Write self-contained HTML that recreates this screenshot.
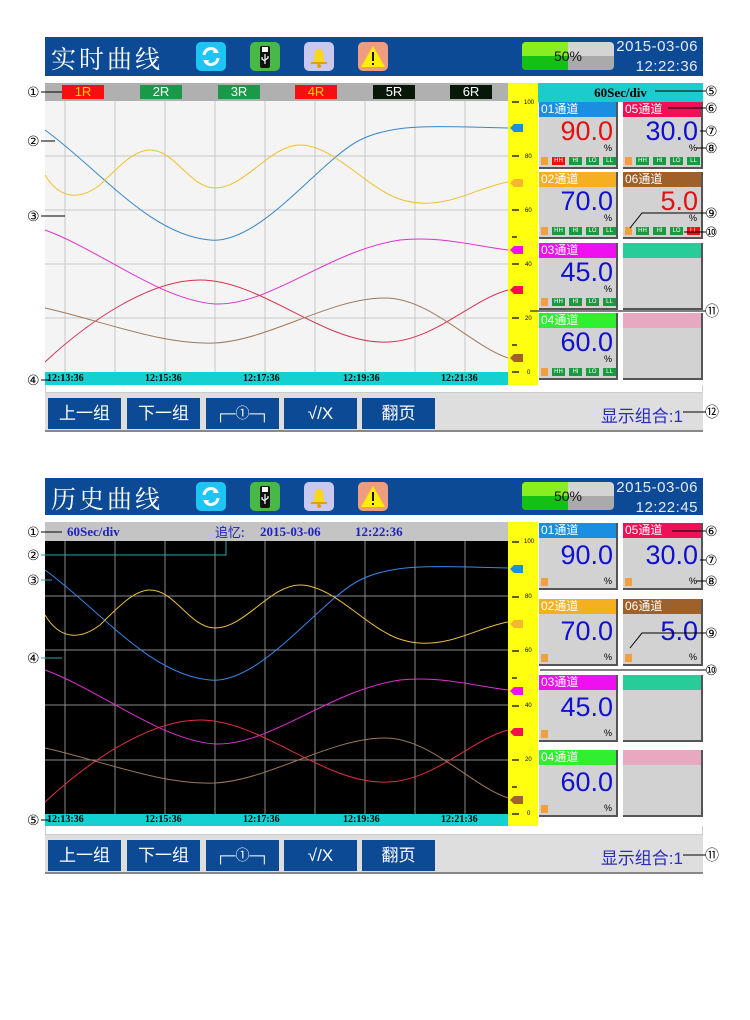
<!DOCTYPE html>
<html><head><meta charset="utf-8">
<style>
*{margin:0;padding:0;box-sizing:border-box}
body{width:750px;height:1020px;background:#fff;position:relative;overflow:hidden;font-family:"Liberation Sans","Noto Sans CJK SC",sans-serif}
.a{position:absolute}
.hdr{position:absolute;left:45px;width:658px;height:39px;background:#0d4a96}
.title{position:absolute;left:6px;top:3px;color:#fff;font-size:25px;letter-spacing:3px;font-family:"Noto Serif CJK SC","Noto Sans CJK SC",serif}
.ic{position:absolute;top:5px;width:30px;height:29px;border-radius:5px}
.bat{position:absolute;left:477px;top:5px;width:92px;height:28px;border-radius:4px;background:linear-gradient(#d4d4d4 50%,#aaa 50%);overflow:hidden}
.bat i{position:absolute;left:0;top:0;width:46px;height:28px;background:linear-gradient(#88ee22 50%,#14c014 50%)}
.bat b{position:absolute;left:0;width:92px;top:6px;text-align:center;font-weight:normal;font-size:14px;color:#111}
.dt{position:absolute;right:5px;color:#e4eaff;font-family:"Liberation Sans Narrow","Liberation Sans",sans-serif;font-size:15px;line-height:20px;text-align:right;top:0;letter-spacing:0.5px}
.lbar{position:absolute;left:45px;top:83px;width:463px;height:18px;background:#b0b0b0}
.lb{position:absolute;top:2px;width:42px;height:14px;font-size:13px;line-height:14px;text-align:center}
.scale{position:absolute;left:508px;width:30px;background:#ffff10}
.card{position:absolute;width:79px;height:67px;background:#d2d2d2;border-right:2px solid #555;border-bottom:2px solid #555}
.ch{height:15px;font-size:12px;color:#fff;line-height:15px;padding-left:2px}
.v{position:absolute;right:3px;top:15px;font-size:27px;line-height:28px}
.pc{position:absolute;right:4px;top:41px;font-size:9px;color:#000}
.al{position:absolute;left:2px;top:55px;height:8px;width:76px;display:flex;gap:4px}
.al span{display:block;height:8px;width:13px;background:#1a9a40;color:#fff;font-size:6px;line-height:8px;text-align:center}
.al .ck{width:7px;background:#f0a040}
.al .r{background:#ee1010}
.btnbar{position:absolute;left:45px;width:658px;height:39px;background:#dedede;border-bottom:2px solid #888}
.bt{position:absolute;top:5px;height:31px;width:73px;background:#0d4a96;color:#fff;font-size:17px;text-align:center;line-height:31px}
.disp{position:absolute;right:20px;top:9px;font-size:17px;color:#2a2ac0}
.tbar{position:absolute;left:45px;width:463px;height:13px;background:#14d0d0;font-family:"Liberation Serif",serif;font-weight:bold;font-size:10px;line-height:13px;color:#000}
.tbar span{position:absolute;top:0}
</style></head><body>

<div class="hdr" style="top:37px">
 <div class="title">实时曲线</div>
 <div class="ic" style="left:151px;background:#1ec4f4"><svg width="30" height="29"><path d="M8 13a7 7 0 0 1 13-3" stroke="#fff" stroke-width="3" fill="none"/><path d="M19 6l4 5-6 0z" fill="#fff"/><path d="M22 16a7 7 0 0 1-13 3" stroke="#fff" stroke-width="3" fill="none"/><path d="M11 23l-4-5 6 0z" fill="#fff"/></svg></div>
 <div class="ic" style="left:205px;background:#48b848"><svg width="30" height="29"><rect x="10" y="4" width="10" height="22" rx="2" fill="#111"/><rect x="12" y="5" width="6" height="5" fill="#fff"/><path d="M15 12v10M12 15v2l3 2M18 14v2l-3 2" stroke="#fff" stroke-width="1.2" fill="none"/></svg></div>
 <div class="ic" style="left:259px;background:#cac8ee"><svg width="30" height="29"><path d="M9 20c2-2 1-5 2-9a4 4 0 0 1 8 0c1 4 0 7 2 9z" fill="#f8d818"/><rect x="7" y="20" width="16" height="2" fill="#e0a000"/><circle cx="15" cy="24" r="2" fill="#e0a000"/></svg></div>
 <div class="ic" style="left:313px;background:#f09c80"><svg width="30" height="29"><path d="M15 4L27 25H3z" fill="#ffee00"/><rect x="14" y="10" width="2" height="9" fill="#111"/><rect x="14" y="21" width="2" height="2" fill="#111"/></svg></div>
 <div class="bat"><i></i><b>50%</b></div>
 <div class="dt">2015-03-06<br>12:22:36</div>
</div>

<div class="lbar">
 <div class="lb" style="left:17px;background:#f41010;color:#ffd000">1R</div>
 <div class="lb" style="left:95px;background:#1a9a48;color:#fff">2R</div>
 <div class="lb" style="left:173px;background:#1a9a48;color:#fff">3R</div>
 <div class="lb" style="left:250px;background:#f41010;color:#ffd000">4R</div>
 <div class="lb" style="left:328px;background:#081808;color:#fff">5R</div>
 <div class="lb" style="left:405px;background:#081808;color:#fff">6R</div>
</div>

<svg class="a" style="left:0;top:0" width="750" height="1020">
 <rect x="45" y="101" width="463" height="271" fill="#f4f4f4"/>
 <g stroke="#c8c8c8" stroke-width="1">
  <path d="M65 101V372M115 101V372M165 101V372M215 101V372M265 101V372M315 101V372M365 101V372M415 101V372M465 101V372"/>
  <path d="M45 156H508M45 210H508M45 264H508M45 318H508"/>
 </g>
 <g fill="none" stroke-width="1">
  <path d="M45 130C100 170 150 235 210 240C260 245 320 160 360 140C390 125 430 126 470 127L508 128" stroke="#3a86c8"/>
  <path d="M45 175C60 200 80 200 100 185C120 165 135 150 150 150C175 150 190 188 215 188C245 188 270 145 300 145C330 145 360 180 390 195C410 205 430 205 450 200C470 195 490 185 508 182" stroke="#f0c030"/>
  <path d="M45 230C100 250 160 300 215 304C270 306 330 250 400 240C440 236 470 245 508 250" stroke="#e030d0"/>
  <path d="M45 362C90 320 150 280 200 280C260 280 320 340 380 342C430 345 470 300 508 290" stroke="#d83050"/>
  <path d="M45 308C100 320 160 345 215 343C270 340 330 298 385 298C430 298 470 345 508 358" stroke="#a0785a"/>
 </g>
</svg>

<div class="scale" style="top:83px;height:302px"></div>
<svg class="a" style="left:508px;top:83px" width="30" height="302">
 <g stroke="#000" stroke-width="1.3"><path d="M4 19h7M4 73h7M4 127h7M4 181h7M4 235h7M4 289h7M4 46h5M4 100h5M4 154h5M4 208h5M4 262h5"/></g>
 <g font-size="6" fill="#000" font-family="Liberation Sans"><text x="16" y="21">100</text><text x="17" y="75">80</text><text x="17" y="129">60</text><text x="17" y="183">40</text><text x="17" y="237">20</text><text x="19" y="291">0</text></g>
 <path d="M2 45l4-4h9v8h-9z" fill="#1a8ee0"/>
 <path d="M2 100l4-4h9v8h-9z" fill="#f4b830"/>
 <path d="M2 167l4-4h9v8h-9z" fill="#ee10ee"/>
 <path d="M2 207l4-4h9v8h-9z" fill="#f41050"/>
 <path d="M2 275l4-4h9v8h-9z" fill="#a06030"/>
</svg>

<div class="a" style="left:538px;top:83px;width:165px;height:19px;background:#1ccccc;text-align:center;font-family:'Liberation Serif',serif;font-weight:bold;font-size:13px;line-height:19px">60Sec/div</div>
<div class="a" style="left:538px;top:102px;width:165px;height:283px;background:#fff"></div>

<div class="card" style="left:539px;top:102px"><div class="ch" style="background:#1a8ee0">01通道</div><div class="v" style="color:#e41010">90.0</div><div class="pc">%</div><div class="al"><span class="ck"></span><span class="r">HH</span><span>HI</span><span>LO</span><span>LL</span></div></div>
<div class="card" style="left:623px;top:102px;width:80px"><div class="ch" style="background:#f01058">05通道</div><div class="v" style="color:#1010d0">30.0</div><div class="pc">%</div><div class="al"><span class="ck"></span><span>HH</span><span>HI</span><span>LO</span><span>LL</span></div></div>
<div class="card" style="left:539px;top:172px"><div class="ch" style="background:#f4b020">02通道</div><div class="v" style="color:#1010d0">70.0</div><div class="pc">%</div><div class="al"><span class="ck"></span><span>HH</span><span>HI</span><span>LO</span><span>LL</span></div></div>
<div class="card" style="left:623px;top:172px;width:80px"><div class="ch" style="background:#a0602a">06通道</div><div class="v" style="color:#e41010">5.0</div><div class="pc">%</div><div class="al"><span class="ck"></span><span>HH</span><span>HI</span><span>LO</span><span class="r">LL</span></div></div>
<div class="card" style="left:539px;top:243px"><div class="ch" style="background:#ee10ee">03通道</div><div class="v" style="color:#1010d0">45.0</div><div class="pc">%</div><div class="al"><span class="ck"></span><span>HH</span><span>HI</span><span>LO</span><span>LL</span></div></div>
<div class="card" style="left:623px;top:243px;width:80px"><div class="ch" style="background:#28cc98"></div></div>
<div class="card" style="left:539px;top:313px"><div class="ch" style="background:#30ee30">04通道</div><div class="v" style="color:#1010d0">60.0</div><div class="pc">%</div><div class="al"><span class="ck"></span><span>HH</span><span>HI</span><span>LO</span><span>LL</span></div></div>
<div class="card" style="left:623px;top:313px;width:80px"><div class="ch" style="background:#e8a8c0"></div></div>

<div class="tbar" style="top:372px"><span style="left:2px">12:13:36</span><span style="left:100px">12:15:36</span><span style="left:198px">12:17:36</span><span style="left:298px">12:19:36</span><span style="left:396px">12:21:36</span></div>
<div class="a" style="left:45px;top:385px;width:658px;height:8px;border:1px solid #ccc;border-top:none;background:#fff"></div>
<div class="btnbar" style="top:393px">
 <div class="bt" style="left:3px">上一组</div>
 <div class="bt" style="left:82px">下一组</div>
 <div class="bt" style="left:161px;font-size:14px">┌─①─┐</div>
 <div class="bt" style="left:239px">√/X</div>
 <div class="bt" style="left:317px">翻页</div>
 <div class="disp">显示组合:1</div>
</div>

<div class="hdr" style="top:478px;height:37px">
 <div class="title" style="top:2px">历史曲线</div>
 <div class="ic" style="left:151px;top:4px;background:#1ec4f4"><svg width="30" height="29"><path d="M8 13a7 7 0 0 1 13-3" stroke="#fff" stroke-width="3" fill="none"/><path d="M19 6l4 5-6 0z" fill="#fff"/><path d="M22 16a7 7 0 0 1-13 3" stroke="#fff" stroke-width="3" fill="none"/><path d="M11 23l-4-5 6 0z" fill="#fff"/></svg></div>
 <div class="ic" style="left:205px;top:4px;background:#48b848"><svg width="30" height="29"><rect x="10" y="4" width="10" height="22" rx="2" fill="#111"/><rect x="12" y="5" width="6" height="5" fill="#fff"/><path d="M15 12v10M12 15v2l3 2M18 14v2l-3 2" stroke="#fff" stroke-width="1.2" fill="none"/></svg></div>
 <div class="ic" style="left:259px;top:4px;background:#cac8ee"><svg width="30" height="29"><path d="M9 20c2-2 1-5 2-9a4 4 0 0 1 8 0c1 4 0 7 2 9z" fill="#f8d818"/><rect x="7" y="20" width="16" height="2" fill="#e0a000"/><circle cx="15" cy="24" r="2" fill="#e0a000"/></svg></div>
 <div class="ic" style="left:313px;top:4px;background:#f09c80"><svg width="30" height="29"><path d="M15 4L27 25H3z" fill="#ffee00"/><rect x="14" y="10" width="2" height="9" fill="#111"/><rect x="14" y="21" width="2" height="2" fill="#111"/></svg></div>
 <div class="bat" style="top:4px"><i></i><b>50%</b></div>
 <div class="dt">2015-03-06<br>12:22:45</div>
</div>

<div class="a" style="left:45px;top:522px;width:463px;height:19px;background:#c4c4c4;font-family:'Liberation Serif',serif;font-weight:bold;font-size:13px;line-height:19px;color:#2020c0">
 <span class="a" style="left:22px">60Sec/div</span>
 <span class="a" style="left:170px;font-family:'Noto Sans CJK SC',sans-serif;font-weight:normal">追忆:</span>
 <span class="a" style="left:215px">2015-03-06</span>
 <span class="a" style="left:310px">12:22:36</span>
</div>

<svg class="a" style="left:0;top:0" width="750" height="1020">
 <rect x="45" y="541" width="463" height="273" fill="#000"/>
 <g stroke="#8a8a8a" stroke-width="1">
  <path d="M65 541V814M115 541V814M165 541V814M215 541V814M265 541V814M315 541V814M365 541V814M415 541V814M465 541V814"/>
  <path d="M45 596H508M45 650H508M45 705H508M45 760H508"/>
 </g>
 <g transform="translate(0,440)" fill="none" stroke-width="1">
  <path d="M45 130C100 170 150 235 210 240C260 245 320 160 360 140C390 125 430 126 470 127L508 128" stroke="#3a86e8"/>
  <path d="M45 175C60 200 80 200 100 185C120 165 135 150 150 150C175 150 190 188 215 188C245 188 270 145 300 145C330 145 360 180 390 195C410 205 430 205 450 200C470 195 490 185 508 182" stroke="#e8c040"/>
  <path d="M45 230C100 250 160 300 215 304C270 306 330 250 400 240C440 236 470 245 508 250" stroke="#e030d0"/>
  <path d="M45 362C90 320 150 280 200 280C260 280 320 340 380 342C430 345 470 300 508 290" stroke="#e03040"/>
  <path d="M45 308C100 320 160 345 215 343C270 340 330 298 385 298C430 298 470 345 508 358" stroke="#a0785a"/>
 </g>
</svg>

<div class="scale" style="top:522px;height:304px"></div>
<svg class="a" style="left:508px;top:522px" width="30" height="304">
 <g stroke="#000" stroke-width="1.3"><path d="M4 20h7M4 75h7M4 129h7M4 184h7M4 238h7M4 292h7M4 47h5M4 102h5M4 156h5M4 211h5M4 265h5"/></g>
 <g font-size="6" fill="#000" font-family="Liberation Sans"><text x="16" y="21">100</text><text x="17" y="76">80</text><text x="17" y="130">60</text><text x="17" y="185">40</text><text x="17" y="239">20</text><text x="19" y="293">0</text></g>
 <path d="M2 47l4-4h9v8h-9z" fill="#1a8ee0"/>
 <path d="M2 102l4-4h9v8h-9z" fill="#f4b830"/>
 <path d="M2 169l4-4h9v8h-9z" fill="#ee10ee"/>
 <path d="M2 210l4-4h9v8h-9z" fill="#f41050"/>
 <path d="M2 278l4-4h9v8h-9z" fill="#a06030"/>
</svg>

<div class="a" style="left:538px;top:522px;width:165px;height:304px;background:#fff"></div>
<div class="card" style="left:539px;top:523px"><div class="ch" style="background:#1a8ee0">01通道</div><div class="v" style="color:#1010d0;top:18px">90.0</div><div class="pc" style="top:53px">%</div><div class="al"><span class="ck"></span></div></div>
<div class="card" style="left:623px;top:523px;width:80px"><div class="ch" style="background:#f01058">05通道</div><div class="v" style="color:#1010d0;top:18px">30.0</div><div class="pc" style="top:53px">%</div><div class="al"><span class="ck"></span></div></div>
<div class="card" style="left:539px;top:599px"><div class="ch" style="background:#f4b020">02通道</div><div class="v" style="color:#1010d0;top:18px">70.0</div><div class="pc" style="top:53px">%</div><div class="al"><span class="ck"></span></div></div>
<div class="card" style="left:623px;top:599px;width:80px"><div class="ch" style="background:#a0602a">06通道</div><div class="v" style="color:#1010d0;top:18px">5.0</div><div class="pc" style="top:53px">%</div><div class="al"><span class="ck"></span></div></div>
<div class="card" style="left:539px;top:675px"><div class="ch" style="background:#ee10ee">03通道</div><div class="v" style="color:#1010d0;top:18px">45.0</div><div class="pc" style="top:53px">%</div><div class="al"><span class="ck"></span></div></div>
<div class="card" style="left:623px;top:675px;width:80px"><div class="ch" style="background:#28cc98"></div></div>
<div class="card" style="left:539px;top:750px"><div class="ch" style="background:#30ee30">04通道</div><div class="v" style="color:#1010d0;top:18px">60.0</div><div class="pc" style="top:53px">%</div><div class="al"><span class="ck"></span></div></div>
<div class="card" style="left:623px;top:750px;width:80px"><div class="ch" style="background:#e8a8c0"></div></div>

<div class="tbar" style="top:814px;height:12px;line-height:12px"><span style="left:2px">12:13:36</span><span style="left:100px">12:15:36</span><span style="left:198px">12:17:36</span><span style="left:298px">12:19:36</span><span style="left:396px">12:21:36</span></div>
<div class="a" style="left:45px;top:826px;width:658px;height:9px;border:1px solid #ccc;border-top:none;background:#fff"></div>
<div class="btnbar" style="top:835px">
 <div class="bt" style="left:3px">上一组</div>
 <div class="bt" style="left:82px">下一组</div>
 <div class="bt" style="left:161px;font-size:14px">┌─①─┐</div>
 <div class="bt" style="left:239px">√/X</div>
 <div class="bt" style="left:317px">翻页</div>
 <div class="disp">显示组合:1</div>
</div>

<svg class="a" style="left:0;top:0" width="750" height="1020" font-family="DejaVu Sans" font-size="14">
 <g stroke="#000" stroke-width="1" fill="none">
  <path d="M41 92H62M41 141H55M41 216H65M41 380H50"/>
  <path d="M655 91H706M668 108H706M700 131H706M696 148H706M630 228L642 213H706M684 232H706M530 311H706M683 412H706"/>
  <path d="M41 532H62"/>
  <path d="M41 820H50M672 531H706M700 560H706M696 581H706M630 648L642 633H706M540 670H706M683 855H706"/>
 </g>
 <path d="M41 555H226V541" stroke="#2aa" fill="none"/>
 <path d="M41 580H52M41 658H62" stroke="#2aa" fill="none"/>
 <g fill="#000">
  <text x="27" y="97">①</text><text x="27" y="146">②</text><text x="27" y="221">③</text><text x="27" y="385">④</text>
  <text x="705" y="96">⑤</text><text x="705" y="113">⑥</text><text x="705" y="136">⑦</text><text x="705" y="153">⑧</text><text x="705" y="218">⑨</text><text x="705" y="237">⑩</text><text x="705" y="316">⑪</text><text x="705" y="417">⑫</text>
  <text x="27" y="537">①</text><text x="27" y="560">②</text><text x="27" y="585">③</text><text x="27" y="663">④</text><text x="27" y="825">⑤</text>
  <text x="705" y="536">⑥</text><text x="705" y="565">⑦</text><text x="705" y="586">⑧</text><text x="705" y="638">⑨</text><text x="705" y="675">⑩</text><text x="705" y="860">⑪</text>
 </g>
</svg>
</body></html>
